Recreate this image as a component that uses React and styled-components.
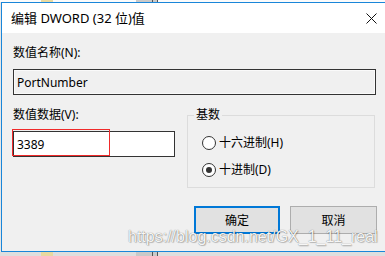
import React from "react";
import styled, { createGlobalStyle } from "styled-components";

const GlobalStyle = createGlobalStyle`
  html, body {
    margin: 0;
    padding: 0;
    width: 385px;
    height: 256px;
    overflow: hidden;
    background: #e6e6e6;
  }
  body {
    font-family: "Segoe UI", "Noto Sans", "Noto Sans CJK SC", sans-serif;
    font-size: 12px;
    color: #000;
  }
`;

const Page = styled.div`
  position: relative;
  width: 385px;
  height: 256px;
  overflow: hidden;
`;

// bits of the desktop showing above and below the dialog
const Strip = styled.div`
  height: ${(p) => p.h}px;
  background: linear-gradient(
    to right,
    ${(p) => p.base} 0 41px,
    #e8d9a0 41px 53px,
    ${(p) => p.base} 53px 136px,
    #c9c9c9 136px 152px,
    #555 152px 153px,
    #c9c9c9 153px 157px,
    #555 157px 158px,
    ${(p) => p.base} 158px
  );
`;

const Dialog = styled.div`
  margin-left: 1px;
  width: 394px;
  height: 250px;
  box-sizing: border-box;
  border: 1px solid #1a86d9;
  background: #f0f0f0;
  display: flex;
  flex-direction: column;
`;

const TitleBar = styled.div`
  height: 30px;
  background: #fff;
  display: flex;
  align-items: center;
  justify-content: space-between;
  padding-left: 9px;
`;

const Title = styled.span`
  font-size: 13px;
  line-height: 16px;
  margin-top: -1px;
`;

const CloseButton = styled.div`
  width: 46px;
  height: 30px;
  display: flex;
  align-items: center;
  justify-content: center;
`;

const Body = styled.div`
  padding: 12px 0 0 11px;
  display: flex;
  flex-direction: column;
`;

const Label = styled.div`
  line-height: 16px;
  height: 16px;
`;

const TextBox = styled.div`
  box-sizing: border-box;
  width: ${(p) => p.w}px;
  height: 26px;
  margin-top: 8px;
  border: 1px solid #333;
  background: ${(p) => (p.readOnly ? "#f0f0f0" : "#fff")};
  display: flex;
  align-items: center;
  padding-left: 3px;
  position: relative;
  ${(p) => p.readOnly && "box-shadow: inset 0 0 0 1px #fafafa;"}
`;

// red annotation box drawn over the data field
const Highlight = styled.div`
  position: absolute;
  left: -2px;
  top: -3px;
  width: 98px;
  height: 27px;
  box-sizing: border-box;
  border: 1px solid #f02a2a;
  pointer-events: none;
`;

const DataRow = styled.div`
  margin-top: 12px;
  display: grid;
  grid-template-columns: 162px 188px;
  column-gap: 12px;
  align-items: start;
`;

const Column = styled.div`
  display: flex;
  flex-direction: column;
`;

const Group = styled.fieldset`
  margin: 0;
  padding: 12px 0 9px 14px;
  border: 1px solid #dcdcdc;
  box-sizing: border-box;
  display: flex;
  flex-direction: column;
  gap: 11px;
`;

const Legend = styled.legend`
  padding: 0 2px;
  margin-left: -8px;
  line-height: 16px;
`;

const RadioRow = styled.label`
  display: flex;
  align-items: center;
  gap: 3px;
  height: 16px;
  line-height: 16px;
`;

const RadioCircle = styled.span`
  width: 14px;
  height: 14px;
  box-sizing: border-box;
  border: 1px solid #333;
  border-radius: 50%;
  background: #fff;
  display: flex;
  align-items: center;
  justify-content: center;
  &::after {
    content: "";
    width: 6px;
    height: 6px;
    border-radius: 50%;
    background: ${(p) => (p.checked ? "#333" : "transparent")};
  }
`;

const ButtonRow = styled.div`
  width: 364px;
  margin-top: 18px;
  display: flex;
  justify-content: flex-end;
  gap: 10px;
`;

const Button = styled.div`
  box-sizing: border-box;
  width: ${(p) => p.w}px;
  height: 28px;
  background: #e1e1e1;
  border: ${(p) => (p.primary ? "2px solid #0078d7" : "1px solid #adadad")};
  display: flex;
  align-items: center;
  justify-content: center;
`;

const Watermark = styled.div`
  position: absolute;
  left: 128px;
  top: 228px;
  font-family: "Liberation Sans", Arial, sans-serif;
  font-size: 16px;
  line-height: 18px;
  color: rgba(255, 255, 255, 0.95);
  text-shadow: 0 0 1px rgba(0, 0, 0, 0.6), 1px 1px 1px rgba(0, 0, 0, 0.2);
  white-space: nowrap;
`;

function Radio({ checked, children }) {
  return (
    <RadioRow>
      <RadioCircle checked={checked} />
      {children}
    </RadioRow>
  );
}

export default function App() {
  return (
    <Page>
      <GlobalStyle />
      <Strip h={2} base="#fbfbfb" />
      <Dialog>
        <TitleBar>
          <Title>编辑 DWORD (32 位)值</Title>
          <CloseButton>
            <svg width="11" height="11" viewBox="0 0 11 11">
              <path d="M0.5 0.5 L10.5 10.5 M10.5 0.5 L0.5 10.5" stroke="#111" strokeWidth="1" />
            </svg>
          </CloseButton>
        </TitleBar>
        <Body>
          <Label>数值名称(N):</Label>
          <TextBox w={363} readOnly>
            PortNumber
          </TextBox>
          <DataRow>
            <Column>
              <Label>数值数据(V):</Label>
              <TextBox w={162}>
                3389
                <Highlight />
              </TextBox>
            </Column>
            <Group>
              <Legend>基数</Legend>
              <Radio>十六进制(H)</Radio>
              <Radio checked>十进制(D)</Radio>
            </Group>
          </DataRow>
          <ButtonRow>
            <Button w={86} primary>
              确定
            </Button>
            <Button w={87}>取消</Button>
          </ButtonRow>
        </Body>
      </Dialog>
      <Strip h={4} base="#dedede" />
      <Watermark>https://blog.csdn.net/GX_1_11_real</Watermark>
    </Page>
  );
}
